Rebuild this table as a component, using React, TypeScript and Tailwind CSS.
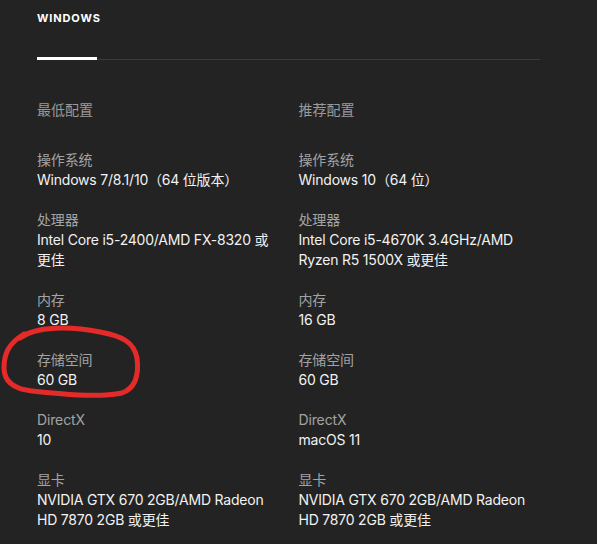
const font = { fontFamily: 'Inter, "Noto Sans CJK SC", sans-serif' }

type Spec = { label: string; value: string }

const minimum: Spec[] = [
  { label: '操作系统', value: 'Windows 7/8.1/10（64 位版本）' },
  { label: '处理器', value: 'Intel Core i5-2400/AMD FX-8320 或更佳' },
  { label: '内存', value: '8 GB' },
  { label: '存储空间', value: '60 GB' },
  { label: 'DirectX', value: '10' },
  { label: '显卡', value: 'NVIDIA GTX 670 2GB/AMD Radeon HD 7870 2GB 或更佳' },
]

const recommended: Spec[] = [
  { label: '操作系统', value: 'Windows 10（64 位）' },
  { label: '处理器', value: 'Intel Core i5-4670K 3.4GHz/AMD Ryzen R5 1500X 或更佳' },
  { label: '内存', value: '16 GB' },
  { label: '存储空间', value: '60 GB' },
  { label: 'DirectX', value: 'macOS 11' },
  { label: '显卡', value: 'NVIDIA GTX 670 2GB/AMD Radeon HD 7870 2GB 或更佳' },
]

function Column({ title, specs }: { title: string; specs: Spec[] }) {
  return (
    <div className="flex flex-col">
      <div className="text-[14px] leading-5 text-[#9a9a9a]">{title}</div>
      <div className="mt-[30px] flex flex-col gap-5">
        {specs.map((s) => (
          <div key={s.label}>
            <div className="text-[14px] leading-5 tracking-[-0.01em] text-[#a3a3a3]">{s.label}</div>
            <div className="text-[14px] leading-5 tracking-[-0.015em] text-[#f2f2f2]">{s.value}</div>
          </div>
        ))}
      </div>
    </div>
  )
}

export default function App() {
  return (
    <div className="relative h-[544px] w-[597px] overflow-hidden bg-[#232323]" style={font}>
      <div className="w-[503px] pl-[37px] box-content">
        <div className="pt-[12px] text-[11px] font-bold leading-[12px] tracking-[0.08em] text-white">
          WINDOWS
        </div>
        <div className="mt-[33px] flex items-end">
          <div className="h-[3px] w-[60px] bg-white" />
          <div className="h-px flex-1 bg-[#3b3b3b]" />
        </div>
        <div className="mt-[40px] grid grid-cols-2 gap-x-5">
          <Column title="最低配置" specs={minimum} />
          <Column title="推荐配置" specs={recommended} />
        </div>
      </div>

      {/* hand-drawn red circle */}
      <svg className="absolute left-0 top-0" width="597" height="544" viewBox="0 0 597 544" fill="none">
        <path
          d="M20 338 C36 326 70 326 100 332 C122 336 134 342 137 358 C139 374 136 388 122 393 C98 398 60 394 32 391 C14 389 4 382 4 368 C4 354 8 344 24 334"
          stroke="#e52a2a"
          strokeWidth="5"
          strokeLinecap="round"
        />
      </svg>
    </div>
  )
}
